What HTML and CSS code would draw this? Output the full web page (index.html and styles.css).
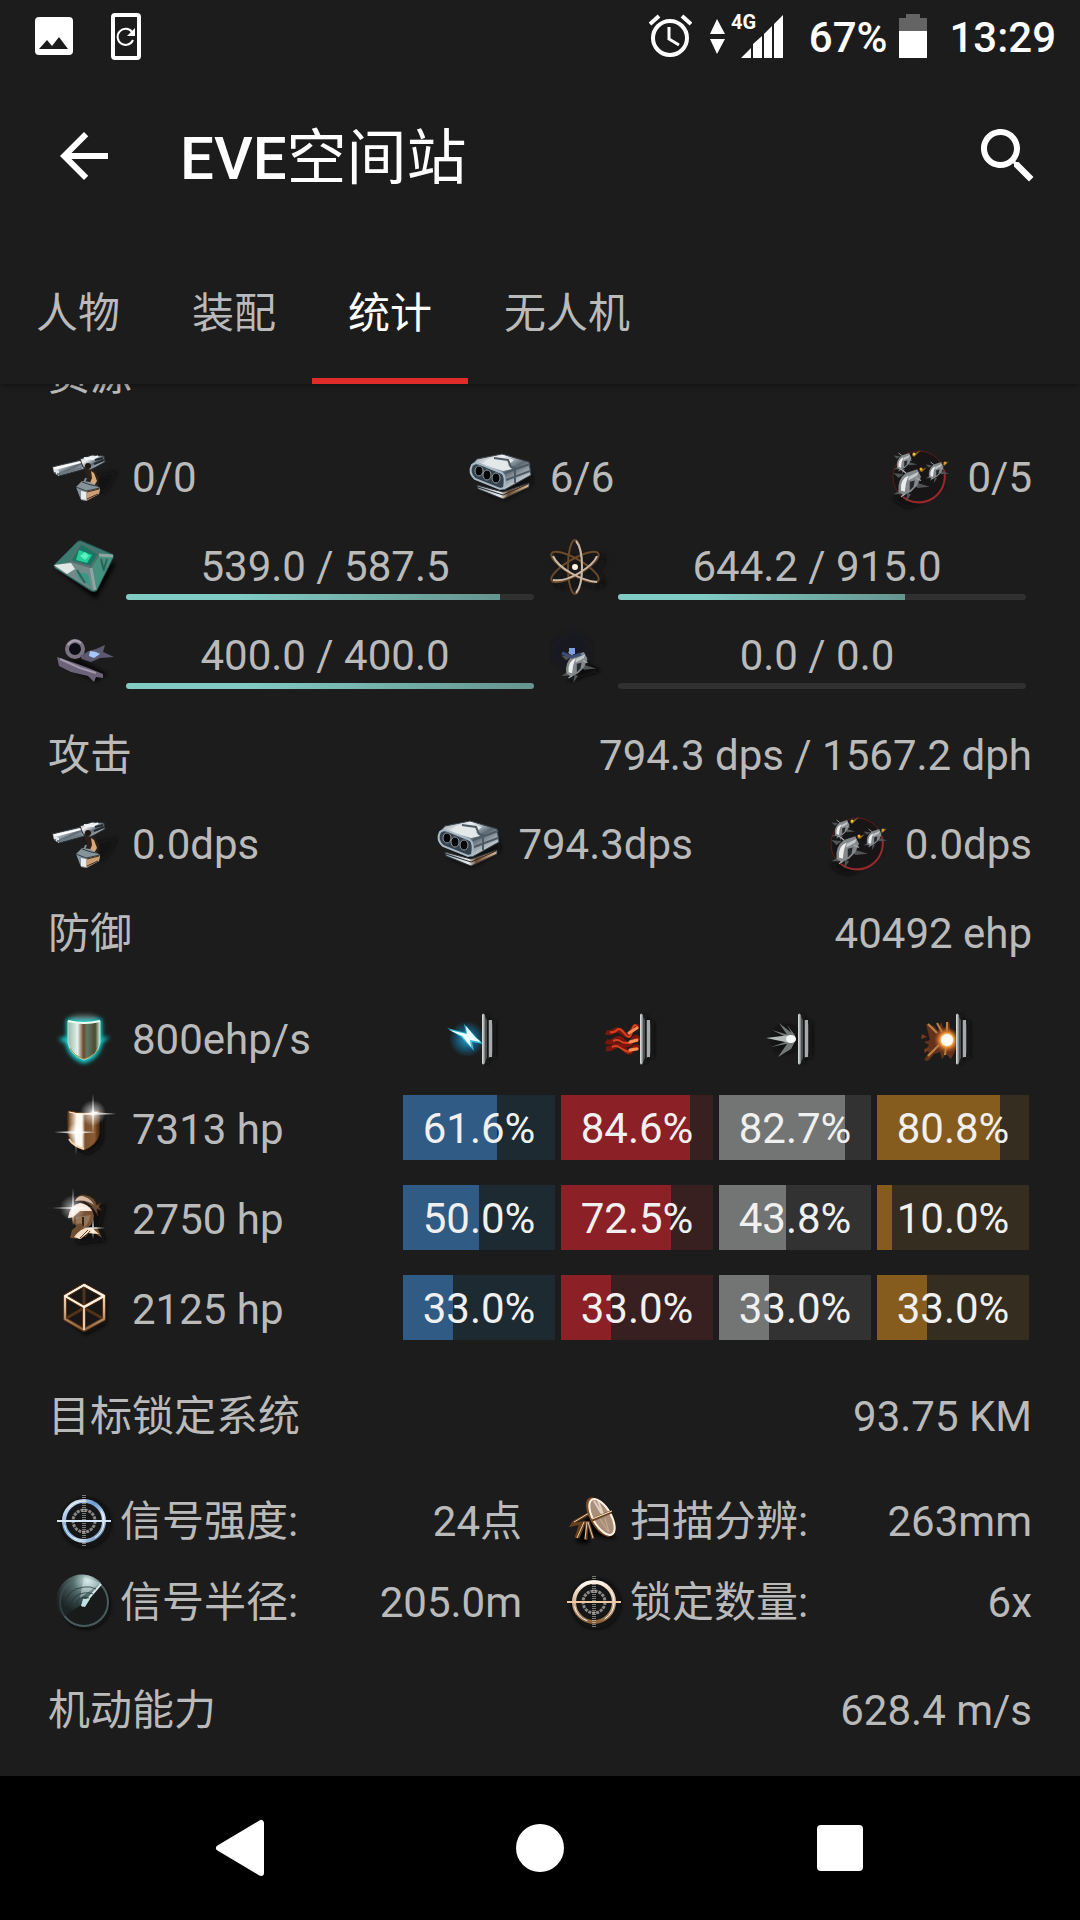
FILE: index.html
```html
<!DOCTYPE html>
<html lang="zh-CN">
<head>
<meta charset="utf-8">
<meta name="viewport" content="width=device-width, initial-scale=1">
<title>EVE空间站</title>
<link rel="stylesheet" href="styles.css">
</head>
<body>
<svg class="sprite" width="0" height="0" aria-hidden="true">
  <defs>
    <linearGradient id="steel" x1="0" y1="0" x2="1" y2="1">
      <stop offset="0" stop-color="#7d8a94"/><stop offset=".3" stop-color="#f2f5f7"/><stop offset=".55" stop-color="#5c6872"/><stop offset=".8" stop-color="#c8d0d6"/><stop offset="1" stop-color="#3a3f45"/>
    </linearGradient>
    <linearGradient id="warm" x1="0" y1="0" x2="1" y2="0">
      <stop offset="0" stop-color="#8fa0aa"/><stop offset=".45" stop-color="#e9eef0"/><stop offset=".6" stop-color="#6b4a30"/><stop offset="1" stop-color="#e2b78c"/>
    </linearGradient>
    <linearGradient id="bronze" x1="0" y1="0" x2="1" y2="0">
      <stop offset="0" stop-color="#6b3d12"/><stop offset=".28" stop-color="#fff6ea"/><stop offset=".45" stop-color="#fffaf2"/><stop offset=".55" stop-color="#7a522e"/><stop offset=".85" stop-color="#8a5c34"/><stop offset="1" stop-color="#4a2a10"/>
    </linearGradient>
    <linearGradient id="aqua" x1="0" y1="0" x2="1" y2="0">
      <stop offset="0" stop-color="#9fb9a8"/><stop offset=".3" stop-color="#e4f1ee"/><stop offset=".48" stop-color="#6d4a28"/><stop offset=".6" stop-color="#5d7868"/><stop offset=".85" stop-color="#4d4a30"/><stop offset="1" stop-color="#c9f0dc"/>
    </linearGradient>
    <linearGradient id="gold" x1="0" y1="0" x2="0" y2="1">
      <stop offset="0" stop-color="#fff3e6"/><stop offset=".5" stop-color="#d9b894"/><stop offset="1" stop-color="#8b623c"/>
    </linearGradient>
    <linearGradient id="blue" x1="0" y1="0" x2="1" y2="1">
      <stop offset="0" stop-color="#f2f8ff"/><stop offset=".4" stop-color="#6c9bd0"/><stop offset=".7" stop-color="#c4dcf5"/><stop offset="1" stop-color="#3f6b9c"/>
    </linearGradient>
    <linearGradient id="plate" x1="0" y1="0" x2="1" y2="0">
      <stop offset="0" stop-color="#e6e8e8"/><stop offset=".5" stop-color="#a0a4a4"/><stop offset="1" stop-color="#3c3e3e"/>
    </linearGradient>
    <radialGradient id="glint"><stop offset="0" stop-color="#fff"/><stop offset=".3" stop-color="#fff" stop-opacity=".55"/><stop offset="1" stop-color="#fff" stop-opacity="0"/></radialGradient>
    <radialGradient id="boltglow"><stop offset="0" stop-color="#2d9fd0"/><stop offset=".6" stop-color="#14587a" stop-opacity=".8"/><stop offset="1" stop-color="#14587a" stop-opacity="0"/></radialGradient>
    <radialGradient id="blast"><stop offset="0" stop-color="#fff"/><stop offset=".35" stop-color="#fff2cf"/><stop offset=".55" stop-color="#f0963c"/><stop offset="1" stop-color="#b04a14" stop-opacity="0"/></radialGradient>
    <radialGradient id="radarfill" cx=".7" cy=".15" r=".8"><stop offset="0" stop-color="#d2e6e6"/><stop offset=".4" stop-color="#56706f"/><stop offset="1" stop-color="#1e2a2b" stop-opacity=".6"/></radialGradient>
    <filter id="soft" x="-30%" y="-30%" width="160%" height="160%"><feGaussianBlur stdDeviation="2"/></filter>
    <filter id="fine" x="-30%" y="-30%" width="160%" height="160%"><feGaussianBlur stdDeviation=".6"/></filter>

    <symbol id="i-turret" viewBox="0 0 72 72">
      <path d="M48 34l22-4-10 18-8 6z" fill="#0d0d0d" opacity=".6" filter="url(#soft)"/>
      <path d="M36 28l10 1 5 8-1 8-8 3-7-6 4-7z" fill="#2b2119"/>
      <path d="M43 30l3 2 3 8-3 5-4-3 2-5z" fill="#d8a878"/><path d="M38 37l-2 5 5 4" stroke="#7f8b92" stroke-width="2" fill="none"/>
      <path d="M28 46l6-6 8 1 10 6-1 6-13 7-5-1z" fill="#86939b"/>
      <path d="M38 50l14-3-1 6-13 7z" fill="#c99f78"/><path d="M33 50l5 1v8l-5-1z" fill="#e6ecef"/><path d="M28 46l10 4 14-3M34 41l9 3 6 1" stroke="#343c41" fill="none"/>
      <path d="M39 51l12-3M39 58l11-5" stroke="#40301f"/>
      <path d="M4 26l29-7 4 2-1 7-25 7z" fill="url(#steel)" stroke="#2f363b"/>
      <path d="M6 28l27-7" stroke="#fff" stroke-width="2"/><path d="M12 33l22-6" stroke="#6d7a83" stroke-width="2"/>
      <path d="M5 27l6 3v5l-5-3z" fill="#dfe5e8"/><path d="M7 31v2M10 32v2" stroke="#111"/>
      <path d="M32 18l12-4 12 1 1 6-9 5-6 3-7-3z" fill="url(#steel)" stroke="#2b3034"/>
      <path d="M36 17l9 1 5-3" stroke="#f4f7f8" stroke-width="2" fill="none"/><path d="M47 19l8-2M46 23l10-4" stroke="#222a30" stroke-width="2"/><circle cx="40" cy="25" r="3" fill="#20160f"/>
    </symbol>
    <symbol id="i-missile" viewBox="0 0 72 72">
      <path d="M14 50l25 9 28-16-2-12z" fill="#090909" opacity=".8" filter="url(#soft)"/>
      <path d="M11 44l26 7 26-9v4L37 58 12 48z" fill="url(#warm)" stroke="#30353a"/><path d="M12 46l25 8 25-11" stroke="#29292c" fill="none"/>
      <path d="M5 25l6-7 25-5 27 8 2 13-27 15-31-12z" fill="url(#steel)" stroke="#3a444c"/>
      <path d="M22 18l14-3 12 4-6 5 4 4-9 2-21-7z" fill="#e3e8eb"/>
      <path d="M28 17l14 2 3 7 4 1v15M39 32l25-9M40 39l24-9" stroke="#4f5b64" stroke-width="2" fill="none"/>
      <path d="M6 24q3-3 8-1l22 9q4 3 2 15l-4 1-25-10q-7-6-3-14z" fill="#35424e" stroke="#a8b9c6" stroke-width="2"/>
      <g fill="#050607" stroke="#8f9aa2"><ellipse cx="13" cy="30" rx="4" ry="5"/><ellipse cx="21" cy="34" rx="4" ry="5"/><ellipse cx="30" cy="37" rx="4" ry="5"/></g>
    </symbol>
    <symbol id="drone" viewBox="0 0 32 32">
      <path d="M6 12l-4-4 8 1zM18 15l13 4-10 1zM7 22l-5 3 6 0zM13 24l-1 7 4-6z" fill="#505456"/>
      <path d="M6 23q-1-10 6-15l9-3 3 6-3 7-5 5-6 3z" fill="#84888a"/>
      <path d="M8 22q-1-9 6-12l-2 6-1 7z" fill="#eceded"/><path d="M14 11l8-4-1 3-7 4z" fill="#c4c7c8"/>
      <path d="M15 15l4-1-1 5-3 3z" fill="#26292b"/><path d="M12 8l-4-3M20 12l4 2M11 25l-3 2" stroke="#a9acae"/>
    </symbol>
    <symbol id="i-drones" viewBox="0 0 72 72">
      <path d="M10 58q16 16 30 2l22-16-18-14z" fill="#080808" opacity=".8" filter="url(#soft)"/>
      <circle cx="36" cy="36" r="26" fill="#171516" stroke="#5a1c19"/><path d="M20 56a26 26 0 0 0 41-27" fill="none" stroke="#98292a" stroke-width="2"/>
      <use href="#drone" x="8" y="8" width="28" height="26"/><use href="#drone" x="39" y="17" width="30" height="26"/><use href="#drone" x="8" y="22" width="40" height="40"/>
      <path d="M29 14l9-5-7 7zM60 23l6-3-5 5zM36 30l8-4-5 5z" fill="#8f6c1c"/><circle cx="31" cy="13" r="1.500" fill="#f2c04a"/><circle cx="62" cy="22" r="1.500" fill="#d8a02a"/><circle cx="38" cy="28" r="1.500" fill="#f2b02a"/>
    </symbol>
    <symbol id="i-cpu" viewBox="0 0 72 72">
      <path d="M8 38l40 30 20-36z" fill="#060606" opacity=".9" filter="url(#soft)"/>
      <g filter="url(#fine)">
      <path d="M30 10q3-1 6 1l28 12q2 1 1 4L49 59q-2 3-6 1L7 37q-2-2 0-4z" fill="#3a7a70" stroke="#214c48"/>
      <path d="M6 34l17-3 20 6 3 23L8 37z" fill="#728b89"/><path d="M6 34l17-2 4 6-8 5z" fill="#e1e7e5"/><path d="M28 41l12 2 3 13-12-8z" fill="#3d9583"/><path d="M43 37l9-13 13 2-17 34z" fill="#45907f"/>
      <path d="M33 12l18 11-8 13-21-6z" fill="#1d7563" stroke="#55706d" stroke-width="2"/><path d="M31 19l13 5-5 8-11-3z" fill="#22cf97"/><path d="M32 25l5-4 4 4-4 4z" fill="#5cf0bf"/>
      <path d="M51 24l14 1M43 37l4 22" stroke="#8fa5a2" stroke-width="3"/><path d="M53 28l3 12M59 28l-3 10M29 39l8 13" stroke="#2a635a" stroke-width="2"/>
      </g>
    </symbol>
    <symbol id="i-atom" viewBox="0 0 72 72">
      <g fill="none" stroke="#090909" stroke-width="4" opacity=".5" filter="url(#soft)"><ellipse cx="40" cy="40" rx="27" ry="9" transform="rotate(30 40 40)"/><ellipse cx="40" cy="40" rx="27" ry="9" transform="rotate(-30 40 40)"/></g>
      <g fill="none" stroke="#6b4a2c" stroke-width="2"><ellipse cx="35" cy="36" rx="7" ry="27"/><ellipse cx="35" cy="36" rx="27" ry="8" transform="rotate(30 35 36)"/><ellipse cx="35" cy="36" rx="27" ry="8" transform="rotate(-30 35 36)"/></g>
      <g fill="none" stroke="#cbbaa8" stroke-width="2"><path d="M36 10q6 7 6 26t-6 26M13 25q4 9 18 17t26 9M13 49q11 2 26-7t18-17"/></g><circle cx="35" cy="36" r="3" fill="#fff1df"/>
    </symbol>
    <symbol id="i-calibration" viewBox="0 0 72 72">
      <g filter="url(#soft)" opacity=".7"><path d="M12 44l36 18 12-8-30-16z" fill="#050505"/></g>
      <g filter="url(#fine)"><circle cx="27" cy="29" r="8" fill="#111014" stroke="#7a7280" stroke-width="4"/><path d="M20 25q6-8 13-2" fill="none" stroke="#aaa2b3" stroke-width="2"/>
      <path d="M32 36l9-5 7-2 9-4-2 7 11 5-14 1-9 4-9-3z" fill="#5c5a70"/><path d="M42 31l6 1 4 2-6 4-5-2z" fill="#a6c8f8"/>
      <path d="M9 37l15 5 14 5 17 7v4l-7-1-2 5-6-6-17-4-12-6z" fill="#6c6478"/><path d="M12 39l20 9 16 5" stroke="#a198aa" stroke-width="2" fill="none"/></g>
    </symbol>
    <symbol id="i-bay" viewBox="0 0 72 72">
      <circle cx="32" cy="31" r="19" fill="#151827" opacity=".55" filter="url(#soft)"/><path d="M27 62l34-11-18-10z" fill="#090909" filter="url(#soft)"/>
      <g filter="url(#fine)"><use href="#drone" x="18" y="26" width="40" height="38"/><path d="M22 33l10 4 9-3" stroke="#3d4c78" stroke-width="3" fill="none"/><path d="M29 28h6v6h-6z" fill="#7f9fe0"/></g>
    </symbol>

    <symbol id="i-regen" viewBox="0 0 72 72">
      <path d="M19 16h34l1 20 7-2-7 6q-3 16-18 20-15-4-18-20l-7-4 8-2z" fill="#12cccc" stroke="#12cccc" filter="url(#soft)"/><ellipse cx="36" cy="15" rx="14" ry="4" fill="#bbb" opacity=".35" filter="url(#soft)"/>
      <path d="M20 18q16 4 32 0v22q-2 12-16 17-14-5-16-17z" fill="url(#aqua)" stroke="#a9e5cf"/><path d="M20 18q16 4 32 0" stroke="#eafff0" stroke-width="2" fill="none"/><path d="M22 45q4 8 14 11 10-3 14-9" fill="none" stroke="#a88a4a"/>
    </symbol>
    <symbol id="i-shield" viewBox="0 0 72 72">
      <path d="M25 24h30v22q-3 12-17 15l-12-8z" fill="#080808" filter="url(#soft)"/>
      <path d="M20 18q16 4 31 0v23q-2 11-15 16-14-5-16-16z" fill="url(#bronze)" stroke="#633a14"/><path d="M21 19q15 4 29 0" stroke="#ffedda" fill="none"/><path d="M21 46q4 7 15 10" stroke="#f5d1a5" stroke-width="2" fill="none"/>
      <circle cx="45" cy="20" r="13" fill="url(#glint)"/><path d="M45 1l1 18 22 2-22 1-1 19-1-19-20-1 20-1z" fill="#fff" opacity=".7"/><circle cx="28" cy="39" r="9" fill="url(#glint)"/><path d="M6 39l22-1 20 1-20 2zM28 26l1 14-1 22-1-22z" fill="#fff" opacity=".7"/>
    </symbol>
    <symbol id="i-armor" viewBox="0 0 72 72">
      <path d="M28 30l30-8-6 22 6 14-28 3z" fill="#090807" opacity=".9" filter="url(#soft)"/>
      <path d="M27 18q2-8 11-6 9 2 11 10l4-3-2 5 3 4-5-2 1 7-6-9q-8-8-17-6z" fill="#6b4d36" stroke="#332010"/><path d="M27 18q4-7 10-4 6 2 9 8-8-6-19-4z" fill="#d3b9a2"/>
      <path d="M20 35q2-14 14-15 11 3 12 13l-3 9-9 6-9-8-1-5z" fill="#775235"/><path d="M20 35q2-13 12-15 8 1 12 8l-12 0-7 6z" fill="#f7e8d8"/><path d="M28 34l15-2-3 8-4 5-8-5z" fill="#94755a"/><path d="M35 34v9" stroke="#372010" stroke-width="2"/>
      <path d="M22 55l2-8 8-7 7 6 10-2 5 11-6-4-8-1-7 6z" fill="#6f4e30"/><path d="M26 54q8-11 18-9l7 6-11-1-8 6z" fill="#f3dfc8"/><path d="M32 55l8-8M37 54l5-6" stroke="#63452a"/>
      <circle cx="25" cy="25" r="13" fill="url(#glint)" opacity=".8"/><path d="M25 5l1 19 20 1-20 1-1 17-1-17-20-1 20-1zM45 34l1 10 11 1-11 1-1 10-1-10-10-1 10-1z" fill="#fff" opacity=".7"/>
    </symbol>
    <symbol id="i-hull" viewBox="0 0 72 72">
      <path d="M36 14l22 12v25L38 62 20 49z" fill="#070707" filter="url(#soft)"/><path d="M36 12l20 11v23L36 57 17 46V23z" fill="#181716"/>
      <g fill="none" stroke-linejoin="round"><path d="M36 13v22M17 46l19-11 20 11" stroke="#503319" stroke-width="3"/><path d="M36 12l20 11v23L36 57 17 46V23zM17 23l19 11 20-11M36 34v23" stroke="#5c3413" stroke-width="4"/><path d="M36 12l20 11v23L36 57 17 46V23zM17 23l19 11 20-11M36 34v23" stroke="url(#gold)" stroke-width="2"/><path d="M36 34v23" stroke="#e5cdb4" stroke-width="2"/><path d="M17 23l19-11 20 11-20 11z" stroke="#fff5e7" stroke-width="2"/></g>
    </symbol>

    <symbol id="plates" viewBox="0 0 72 72">
      <path d="M42 12h4v48h-4zM49 18h4v37h-4z" fill="#080808" filter="url(#soft)"/><path d="M39 12q1-3 3 0 2 24 0 48-2 3-3 0z" fill="url(#plate)"/><path d="M42 14l2 3v38l-2 4z" fill="#4e5050"/><path d="M45 17q5 0 5 8v22q0 8-5 8z" fill="#383b3b"/><path d="M46 17h3v37h-3z" fill="#a7aaaa"/>
    </symbol>
    <symbol id="i-em" viewBox="0 0 72 72"><ellipse cx="24" cy="36" rx="18" ry="18" fill="url(#boltglow)"/><path d="M4 25l19 5-2-9 12 13 7 7-11-2 2 9-13-14z" fill="#35bad4" filter="url(#fine)"/><path d="M6 27l18 4-1-8 9 11 6 5-11-2 1 7-9-11z" fill="#ecffff"/><use href="#plates"/></symbol>
    <symbol id="i-heat" viewBox="0 0 72 72">
      <g fill="none" stroke="#7a170a" stroke-width="5" filter="url(#fine)"><path d="M5 29q4 2 8-1t9 2 8-1 8-5M5 38q4 3 9-1t9 2 8-1 7-1M5 46q5 0 9-3t9 3 8 1 7-2"/></g>
      <g fill="none" stroke="#d5401f" stroke-width="2"><path d="M9 29q4 1 7-2t8 4 7-3 6-3M12 38q4-2 7 0t7 2 5-1 6-1M11 44q4-2 7 0t7 4 6-1 6-1"/></g><g fill="none" stroke="#ff8f50" stroke-width="3" stroke-linecap="round"><path d="M28 30l8-5M29 39l7-2M29 47l7-1"/></g><use href="#plates"/>
    </symbol>
    <symbol id="i-kinetic" viewBox="0 0 72 72"><ellipse cx="27" cy="36" rx="14" ry="14" fill="#080808" opacity=".7" filter="url(#soft)"/><g fill="#b4bab7" filter="url(#fine)"><path d="M7 35l24-3 5 4-5 4z"/><path d="M20 20l14 11 3 6-6-1zM19 54l13-8 5-9-7 1zM13 27l20 6v4zM12 44l20-4v-3zM28 22l8 10v4z" opacity=".6"/></g><ellipse cx="32" cy="36" rx="5" ry="4" fill="#f5f8f6" filter="url(#fine)"/><use href="#plates"/></symbol>
    <symbol id="i-explosive" viewBox="0 0 72 72"><g fill="#7c3a18" filter="url(#fine)"><path d="M9 21l8 2 4 5 3-9 3 7 5-8 2 12 6 14-6 12-5-5-4 5-2-7-6 2-6 7-4-1 5-8-4-2 4-5-5-3 6-2z" opacity=".75"/><path d="M5 31l5 3-6 2zM7 46l6-1-5 5z"/></g><path d="M11 21l9 9M11 53l11-11M20 20l5 9M30 19v9M28 52l1-8" stroke="#b98444" stroke-width="2" filter="url(#fine)"/><circle cx="30" cy="37" r="13" fill="url(#blast)"/><circle cx="30" cy="37" r="6" fill="#fffdf4" filter="url(#fine)"/><use href="#plates"/></symbol>

    <symbol id="i-target" viewBox="0 0 72 72">
      <circle cx="38" cy="38" r="22" fill="none" stroke="#080808" stroke-width="5" filter="url(#soft)"/><circle cx="36" cy="36" r="20" fill="#151617" stroke="var(--tone)" stroke-width="4"/><circle cx="36" cy="36" r="20" fill="none" stroke="#fff" stroke-width="1" stroke-dasharray="20 18" opacity=".9"/>
      <circle cx="36" cy="36" r="11" fill="none" stroke="#8a8683" stroke-width="3" stroke-dasharray="3 1"/><path d="M9 36h54" stroke="var(--line)" stroke-width="2"/><path d="M35 10v52M37 10v52" stroke="#ded8d0" stroke-dasharray="1 1"/>
    </symbol>
    <symbol id="i-radar" viewBox="0 0 72 72">
      <circle cx="38" cy="39" r="24" fill="#080808" filter="url(#soft)"/><circle cx="36" cy="36" r="24" fill="#191b1b" stroke="#4a5b5e" stroke-width="2"/><path d="M36 37L53 17A25 25 0 1 0 15 51z" fill="url(#radarfill)"/><path d="M32 32L53 17 36 11z" fill="#ddf1f2" opacity=".45" filter="url(#fine)"/><path d="M34 40L53 18" stroke="#d5e9e9" stroke-width="2"/><g fill="none" stroke="#1f3234" opacity=".75"><path d="M17 41q0-18 19-20 7-1 12 2M23 41q0-12 13-14 5-1 9 1M28 40q1-8 8-9l5 1"/></g><path d="M33 40l2-7 7 0-5 8z" fill="#bee1e3"/>
    </symbol>
    <symbol id="i-dish" viewBox="0 0 72 72">
      <path d="M31 28l28 26-27-4-2 9-12-2z" fill="#050505" filter="url(#soft)"/><path d="M32 28L16 37l-2 3 9-2-5 15M27 36l-7 17M29 36l-1 19M30 36l5 18" stroke="#67401d" stroke-width="3" fill="none"/><path d="M31 28L16 37M26 37l-7 16M29 37l-2 17M30 37l5 16" stroke="#e5cdb4" stroke-width="1" fill="none"/>
      <ellipse cx="42" cy="32" rx="22" ry="10" transform="rotate(60 42 32)" fill="#7b4e29"/><ellipse cx="44" cy="32" rx="20" ry="9" transform="rotate(60 44 32)" fill="#a98f78" stroke="#fff3e5" stroke-width="2"/><path d="M36 16l8 13M40 16l5 13" stroke="#efe2d4" stroke-width="2" opacity=".8"/><path d="M47 33l4 14M42 34l8 12" stroke="#d2bda8" opacity=".7"/><path d="M34 35l19-8" stroke="#6b431f" stroke-width="3"/><path d="M34 34l20-8" stroke="#fff0df" stroke-width="1"/>
    </symbol>
  </defs>
</svg>

<div class="status-bar">
  <svg class="status-photo" viewBox="0 0 38 38" aria-hidden="true"><path fill="#fff" fill-rule="evenodd" d="M4 0h30a4 4 0 0 1 4 4v30a4 4 0 0 1-4 4H4a4 4 0 0 1-4-4V4a4 4 0 0 1 4-4zM4 32h29L24 20l-7 9-5-6z"/></svg>
  <svg class="status-phone" viewBox="0 0 30 47" aria-hidden="true"><rect x="2" y="2" width="26" height="43" rx="2" fill="none" stroke="#fff" stroke-width="4"/><path d="M21 19a8 8 0 1 0 1 8" fill="none" stroke="#fff" stroke-width="2"/><path d="M24 15v8h-8z" fill="#fff"/></svg>
  <div class="status-right">
    <svg class="status-alarm" viewBox="0 0 43 44" aria-hidden="true"><g fill="none" stroke="#fff" stroke-width="4"><circle cx="21" cy="24" r="17"/><path d="M1 10l9-8M33 2l9 8"/><path d="M20 13v12l10 6" stroke-width="3"/></g></svg>
    <svg class="status-data" viewBox="0 0 74 45" aria-hidden="true"><path d="M0 20l7-15 8 15zM0 25h15L7 40zM31 44l10-10v10zM43 44V30l9-8v22zM54 44V20l8-8v32zM64 44V10l9-9v43z" fill="#fff"/><text x="21" y="15" class="network">4G</text></svg>
    <span class="status-level">67%</span>
    <svg class="status-battery" viewBox="0 0 28 44" aria-hidden="true"><path d="M0 4h7V0h14v4h7v14H0z" fill="#646464"/><path d="M0 17h28v27H0z" fill="#fff"/></svg>
    <time>13:29</time>
  </div>
</div>

<header class="app-bar">
  <div class="toolbar">
    <button class="icon-button" type="button" aria-label="返回"><svg viewBox="0 0 24 24"><path d="M20 11H7.830l5.590-5.590L12 4l-8 8 8 8 1.410-1.410L7.830 13H20v-2z"/></svg></button>
    <h1>EVE<span>空间站</span></h1>
    <button class="icon-button" type="button" aria-label="搜索"><svg viewBox="0 0 24 24"><path d="M15.500 14h-.790l-.280-.270C15.410 12.590 16 11.110 16 9.500 16 5.910 13.090 3 9.500 3S3 5.910 3 9.500 5.910 16 9.500 16c1.610 0 3.090-.590 4.230-1.570l.270.280v.790l5 4.990L20.490 19l-4.990-5zm-6 0C7.010 14 5 11.990 5 9.500S7.010 5 9.500 5 14 7.010 14 9.500 11.990 14 9.500 14z"/></svg></button>
  </div>
  <nav class="tabs">
    <a href="#person">人物</a><a href="#fitting">装配</a><a href="#stats" class="active" aria-current="page">统计</a><a href="#drones">无人机</a>
  </nav>
</header>

<main id="stats">
  <section class="resources">
    <div class="heading"><h2>资源</h2></div>
    <div class="trio">
      <div class="stat"><svg class="icon"><use href="#i-turret"/></svg><span>0/0</span></div>
      <div class="stat"><svg class="icon"><use href="#i-missile"/></svg><span>6/6</span></div>
      <div class="stat"><svg class="icon"><use href="#i-drones"/></svg><span>0/5</span></div>
    </div>
    <div class="gauges">
      <div class="gauge"><svg class="icon"><use href="#i-cpu"/></svg><div class="meter"><span>539.0 / 587.5</span><div class="track"><div class="fill" style="width:91.7%"></div></div></div></div>
      <div class="gauge"><svg class="icon"><use href="#i-atom"/></svg><div class="meter"><span>644.2 / 915.0</span><div class="track"><div class="fill" style="width:70.4%"></div></div></div></div>
      <div class="gauge"><svg class="icon"><use href="#i-calibration"/></svg><div class="meter"><span>400.0 / 400.0</span><div class="track"><div class="fill" style="width:100%"></div></div></div></div>
      <div class="gauge"><svg class="icon"><use href="#i-bay"/></svg><div class="meter"><span>0.0 / 0.0</span><div class="track"><div class="fill" style="width:0%"></div></div></div></div>
    </div>
  </section>

  <section class="attack">
    <div class="heading"><h2>攻击</h2><span>794.3 dps / 1567.2 dph</span></div>
    <div class="trio">
      <div class="stat"><svg class="icon"><use href="#i-turret"/></svg><span>0.0dps</span></div>
      <div class="stat"><svg class="icon"><use href="#i-missile"/></svg><span>794.3dps</span></div>
      <div class="stat"><svg class="icon"><use href="#i-drones"/></svg><span>0.0dps</span></div>
    </div>
  </section>

  <section class="defence">
    <div class="heading"><h2>防御</h2><span>40492 ehp</span></div>
    <table>
      <thead>
        <tr>
          <th scope="col"><div class="stat"><svg class="icon"><use href="#i-regen"/></svg><span>800ehp/s</span></div></th>
          <th scope="col" class="damage"><svg class="icon" role="img" aria-label="电磁"><use href="#i-em"/></svg></th>
          <th scope="col" class="damage"><svg class="icon" role="img" aria-label="热能"><use href="#i-heat"/></svg></th>
          <th scope="col" class="damage"><svg class="icon" role="img" aria-label="动能"><use href="#i-kinetic"/></svg></th>
          <th scope="col" class="damage"><svg class="icon" role="img" aria-label="爆炸"><use href="#i-explosive"/></svg></th>
        </tr>
      </thead>
      <tbody>
        <tr>
          <th scope="row"><div class="stat"><svg class="icon"><use href="#i-shield"/></svg><span>7313 hp</span></div></th>
          <td><div class="resist em"><div class="level" style="width:61.6%"></div><span>61.6%</span></div></td>
          <td><div class="resist heat"><div class="level" style="width:84.6%"></div><span>84.6%</span></div></td>
          <td><div class="resist kinetic"><div class="level" style="width:82.7%"></div><span>82.7%</span></div></td>
          <td><div class="resist explosive"><div class="level" style="width:80.8%"></div><span>80.8%</span></div></td>
        </tr>
        <tr>
          <th scope="row"><div class="stat"><svg class="icon"><use href="#i-armor"/></svg><span>2750 hp</span></div></th>
          <td><div class="resist em"><div class="level" style="width:50%"></div><span>50.0%</span></div></td>
          <td><div class="resist heat"><div class="level" style="width:72.5%"></div><span>72.5%</span></div></td>
          <td><div class="resist kinetic"><div class="level" style="width:43.8%"></div><span>43.8%</span></div></td>
          <td><div class="resist explosive"><div class="level" style="width:10%"></div><span>10.0%</span></div></td>
        </tr>
        <tr>
          <th scope="row"><div class="stat"><svg class="icon"><use href="#i-hull"/></svg><span>2125 hp</span></div></th>
          <td><div class="resist em"><div class="level" style="width:33%"></div><span>33.0%</span></div></td>
          <td><div class="resist heat"><div class="level" style="width:33%"></div><span>33.0%</span></div></td>
          <td><div class="resist kinetic"><div class="level" style="width:33%"></div><span>33.0%</span></div></td>
          <td><div class="resist explosive"><div class="level" style="width:33%"></div><span>33.0%</span></div></td>
        </tr>
      </tbody>
    </table>
  </section>

  <section class="targeting">
    <div class="heading"><h2>目标锁定系统</h2><span>93.75 KM</span></div>
    <dl>
      <div class="pair"><svg class="icon tone-blue"><use href="#i-target"/></svg><dt>信号强度:</dt><dd>24点</dd></div>
      <div class="pair"><svg class="icon"><use href="#i-dish"/></svg><dt>扫描分辨:</dt><dd>263mm</dd></div>
      <div class="pair"><svg class="icon"><use href="#i-radar"/></svg><dt>信号半径:</dt><dd>205.0m</dd></div>
      <div class="pair"><svg class="icon tone-gold"><use href="#i-target"/></svg><dt>锁定数量:</dt><dd>6x</dd></div>
    </dl>
  </section>

  <section class="mobility">
    <div class="heading"><h2>机动能力</h2><span>628.4 m/s</span></div>
  </section>
</main>

<footer class="system-nav">
  <button type="button" aria-label="返回"><svg viewBox="0 0 72 72"><path d="M15 36L57 11v50z" stroke="#fff" stroke-width="6" stroke-linejoin="round"/></svg></button>
  <button type="button" aria-label="主屏幕"><svg viewBox="0 0 72 72"><circle cx="36" cy="36" r="24"/></svg></button>
  <button type="button" aria-label="最近任务"><svg viewBox="0 0 72 72"><rect x="13" y="13" width="46" height="46" rx="4"/></svg></button>
</footer>
</body>
</html>
```
FILE: styles.css
```css
* {
  box-sizing: border-box;
}

body {
  margin: 0;
  height: 100vh;
  display: flex;
  flex-direction: column;
  background: #1c1c1c;
  color: #bababa;
  font-family: Roboto, "Noto Sans CJK SC", sans-serif;
  font-size: 42px;
  line-height: 48px;
}

h1,
h2,
dl,
dd {
  margin: 0;
}

button {
  padding: 0;
  border: 0;
  background: none;
}

svg {
  display: block;
}

.sprite {
  position: absolute;
}

/* Status bar */
.status-bar {
  flex: none;
  position: relative;
  z-index: 2;
  height: 72px;
  padding: 0 24px 0 35px;
  display: flex;
  align-items: center;
  background: #1c1c1c;
  color: #fff;
  font-weight: 500;
}

.status-photo {
  width: 38px;
  height: 38px;
}

.status-phone {
  width: 30px;
  height: 47px;
  margin-left: 38px;
}

.status-right {
  margin-left: auto;
  display: flex;
  align-items: center;
}

.status-right span,
.status-right time {
  padding-top: 4px;
}

.status-alarm {
  width: 43px;
  height: 44px;
}

.status-data {
  width: 74px;
  height: 45px;
  margin-left: 18px;
  overflow: visible;
}

.status-level {
  margin-left: 25px;
}

.status-battery {
  width: 28px;
  height: 44px;
  margin: 0 22px 0 12px;
}

.network {
  font-size: 20px;
  font-weight: 700;
  fill: #fff;
}

/* App bar */
.app-bar {
  flex: none;
  position: relative;
  z-index: 1;
  background: #1c1c1c;
  box-shadow: 0 1px 6px rgba(0, 0, 0, .4);
}

.toolbar {
  height: 168px;
  padding: 0 36px 0 48px;
  display: flex;
  align-items: center;
}

.icon-button,
.icon-button svg {
  width: 72px;
  height: 72px;
  fill: #fff;
}

h1 {
  flex: 1;
  margin-left: 60px;
  padding-top: 5px;
  color: #fff;
  font-size: 60px;
  line-height: 72px;
  font-weight: 500;
}

h1 span {
  font-weight: 400;
}

.tabs {
  height: 144px;
  display: flex;
}

.tabs a {
  padding: 10px 36px 0;
  display: flex;
  align-items: center;
  border-bottom: 6px solid transparent;
  color: #bababa;
  text-decoration: none;
}

.tabs .active {
  border-bottom-color: #e02b2b;
  color: #fff;
}

/* Scrolled statistics */
main {
  flex: 1;
  min-height: 0;
  padding: 0 48px;
  overflow: hidden;
}

.heading {
  height: 90px;
  display: flex;
  align-items: center;
  justify-content: space-between;
}

h2 {
  font-size: 42px;
  font-weight: 400;
}

.icon {
  flex: none;
  width: 72px;
  height: 72px;
}

.stat {
  display: flex;
  align-items: center;
  gap: 12px;
}

.stat span {
  padding-top: 2px;
}

.trio {
  height: 90px;
  display: grid;
  grid-template-columns: 1fr 1fr auto;
  align-items: center;
}

.resources {
  margin: -53px 0 12px;
}

.resources .heading {
  margin-bottom: 11px;
}

.gauges {
  display: grid;
  grid-template-columns: 1fr 1fr;
}

.gauge {
  height: 89px;
  display: flex;
  align-items: center;
}

.meter {
  flex: 1;
  padding: 9px 6px 0;
  text-align: center;
}

.meter span {
  display: block;
  padding-right: 10px;
}

.track {
  height: 6px;
  margin-top: 3px;
  border-radius: 3px;
  background: #303030;
  overflow: hidden;
}

.fill {
  height: 6px;
  background: linear-gradient(90deg, #80cbc4 30%, #66948f);
}

.attack .heading {
  height: 87px;
}

/* Resistances */
table {
  width: 100%;
  margin: 15px 0 18px;
  border-collapse: collapse;
  table-layout: fixed;
}

tr {
  height: 90px;
}

th,
td {
  padding: 0;
  font-weight: 400;
  text-align: left;
}

.damage {
  width: 158px;
}

.damage .icon {
  margin: 0 auto;
}

.resist {
  position: relative;
  height: 65px;
  margin: 0 3px 4px;
  padding-top: 4px;
  display: flex;
  align-items: center;
  justify-content: center;
  color: #f0f0f0;
}

.resist span {
  position: relative;
}

.level {
  position: absolute;
  top: 0;
  bottom: 0;
  left: 0;
}

.em { background: #1d2a32; }
.em .level { background: #305b84; }
.heat { background: #381f20; }
.heat .level { background: #8b2026; }
.kinetic { background: #323232; }
.kinetic .level { background: #727574; }
.explosive { background: #352d20; }
.explosive .level { background: #865c1e; }

/* Targeting */
dl {
  margin: 18px 0 24px;
  display: grid;
  grid-template-columns: 1fr 1fr;
  column-gap: 36px;
}

.pair {
  height: 81px;
  display: flex;
  align-items: center;
}

dt,
dd {
  padding-top: 2px;
}

dd {
  margin-left: auto;
}

.tone-blue {
  --tone: url(#blue);
  --line: #d5e5f6;
}

.tone-gold {
  --tone: url(#gold);
  --line: #efc9a0;
}

/* System navigation */
.system-nav {
  flex: none;
  height: 144px;
  padding: 0 90px;
  display: flex;
  align-items: center;
  background: #000;
}

.system-nav button {
  flex: 1;
}

.system-nav svg {
  width: 72px;
  height: 72px;
  margin: 0 auto;
  fill: #fff;
}
```
